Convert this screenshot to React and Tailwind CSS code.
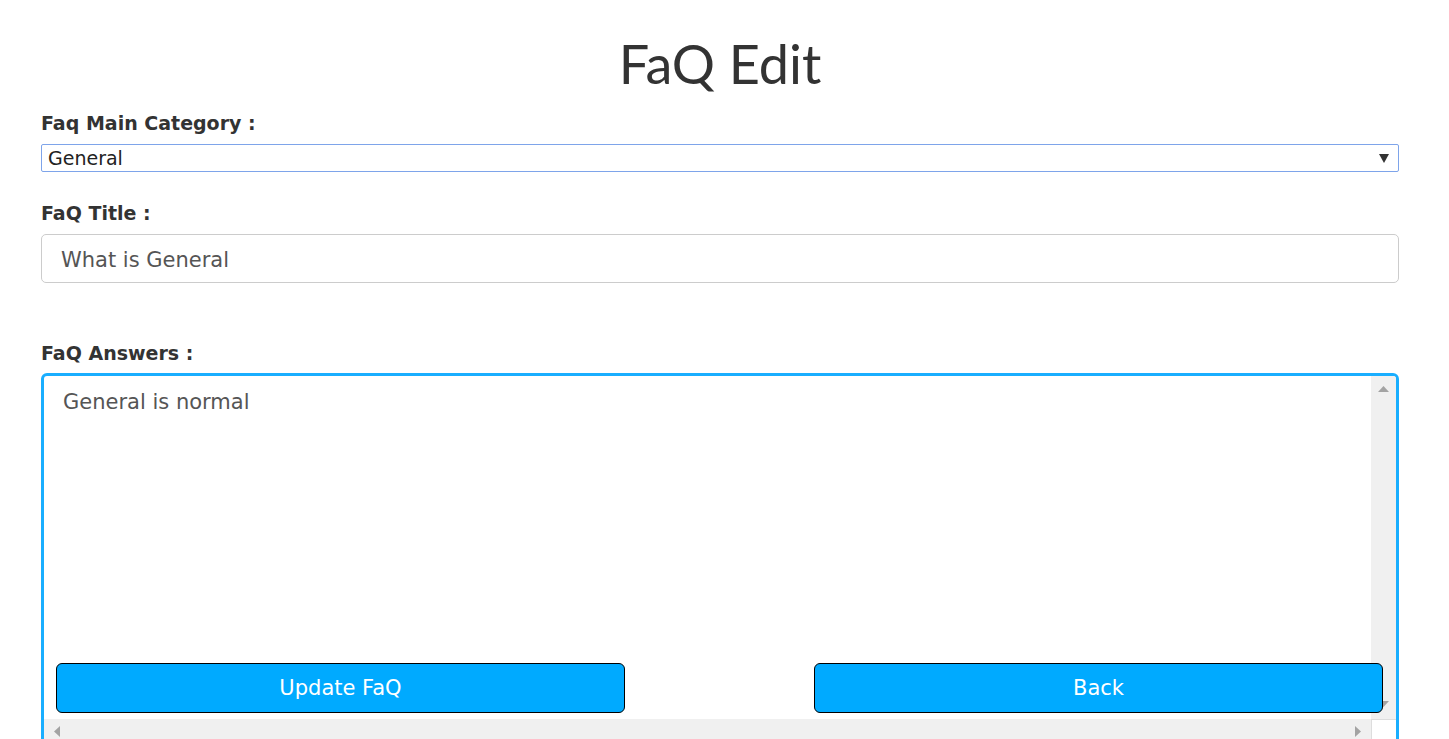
import React from "react";

const sans = { fontFamily: '"DejaVu Sans", Verdana, sans-serif' };

// little grey arrows of the fake scrollbars
const Arrow = ({ dir }) => {
  const pts = {
    up: "0,6 5.5,0 11,6",
    down: "0,0 5.5,6 11,0",
    left: "6,0 0,5.5 6,11",
    right: "0,0 6,5.5 0,11",
  }[dir];
  const vertical = dir === "up" || dir === "down";
  return (
    <svg
      width={vertical ? 11 : 6}
      height={vertical ? 6 : 11}
      viewBox={vertical ? "0 0 11 6" : "0 0 6 11"}
      className="block"
    >
      <polygon points={pts} fill="#a3a3a3" />
    </svg>
  );
};

function Label({ children, className = "" }) {
  return (
    <div
      className={`text-[19px] leading-[22px] font-bold text-[#333] ${className}`}
      style={sans}
    >
      {children}
    </div>
  );
}

export default function App() {
  return (
    <div className="h-[739px] overflow-hidden bg-white">
      <div className="pl-[41px] pr-[50px]">
        <h1
          className="pt-[31px] text-center text-[54px] leading-[65px] font-normal text-[#333]"
          style={{ fontFamily: "Lato, sans-serif" }}
        >
          FaQ Edit
        </h1>

        <Label className="mt-[16px]">Faq Main Category :</Label>
        <div
          className="mt-[10px] h-[28px] border border-[#7ea4ea] rounded-[2px] flex items-center justify-between pl-[6px] pr-[9px] pt-[1px] text-[19px] leading-[25px] text-[#222]"
          style={sans}
        >
          <span>General</span>
          <svg width="10" height="9" viewBox="0 0 10 9" className="block">
            <polygon points="0,0 10,0 5,9" fill="#333" />
          </svg>
        </div>

        <Label className="mt-[30px]">FaQ Title :</Label>
        <div
          className="mt-[10px] h-[49px] border border-[#cccccc] rounded-[5px] flex items-center pl-[19px] pt-[2px] text-[21px] leading-[24px] text-[#555]"
          style={sans}
        >
          What is General
        </div>

        <Label className="mt-[59px]">FaQ Answers :</Label>
        <div className="relative mt-[9px]">
          <div className="h-[374px] border-[3px] border-[#19aeff] rounded-[6px] flex flex-col overflow-hidden">
            <div className="flex flex-1 min-h-0">
              <div
                className="flex-1 pl-[19px] pt-[14px] text-[21px] leading-[24px] text-[#555]"
                style={sans}
              >
                General is normal
              </div>
              <div className="w-[25px] bg-[#f0f0f0] flex flex-col items-center justify-between pt-[10px] pb-[12px]">
                <Arrow dir="up" />
                <Arrow dir="down" />
              </div>
            </div>
            <div className="h-[25px] flex">
              <div className="flex-1 bg-[#f0f0f0] flex items-center justify-between pl-[10px] pr-[10px] pb-[1px]">
                <Arrow dir="left" />
                <Arrow dir="right" />
              </div>
              <div className="w-[25px] bg-white border-t border-l border-[#dddddd]" />
            </div>
          </div>

          <button
            className="absolute left-[15px] top-[290px] w-[569px] h-[50px] bg-[#00aaff] border border-black rounded-[6px] text-white text-[21px] leading-[24px]"
            style={sans}
          >
            Update FaQ
          </button>
          <button
            className="absolute left-[773px] top-[290px] w-[569px] h-[50px] bg-[#00aaff] border border-black rounded-[6px] text-white text-[21px] leading-[24px]"
            style={sans}
          >
            Back
          </button>
        </div>
      </div>
    </div>
  );
}
